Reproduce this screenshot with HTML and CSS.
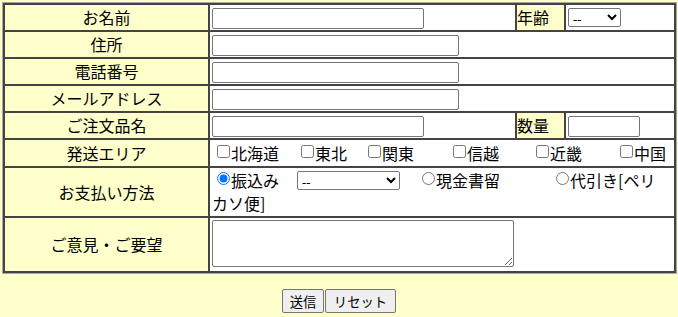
FILE: index.html
```html
<!DOCTYPE html>
<html lang="ja">
<head>
<meta charset="utf-8">
<title>注文フォーム</title>
<link rel="stylesheet" href="styles.css">
</head>
<body>
<form class="order-form">
<table class="form-table">
<colgroup><col class="c1"><col class="c2"><col class="c3"><col class="c4"></colgroup>
<tr>
<td class="label">お名前</td>
<td class="field"><input type="text" class="in-mid"></td>
<td class="label sub">年齢</td>
<td class="field narrow"><select class="sel-age"><option>--</option></select></td>
</tr>
<tr>
<td class="label">住所</td>
<td class="field" colspan="3"><input type="text" class="in-long"></td>
</tr>
<tr>
<td class="label">電話番号</td>
<td class="field" colspan="3"><input type="text" class="in-long"></td>
</tr>
<tr>
<td class="label">メールアドレス</td>
<td class="field" colspan="3"><input type="text" class="in-long"></td>
</tr>
<tr>
<td class="label">ご注文品名</td>
<td class="field"><input type="text" class="in-mid"></td>
<td class="label sub">数量</td>
<td class="field narrow"><input type="text" class="in-qty"></td>
</tr>
<tr class="area-row">
<td class="label">発送エリア</td>
<td class="field areas" colspan="3"><label class="opt w84"><input type="checkbox">北海道</label><label class="opt w67"><input type="checkbox">東北</label><label class="opt w85"><input type="checkbox">関東</label><label class="opt w83"><input type="checkbox">信越</label><label class="opt w84"><input type="checkbox">近畿</label><label class="opt"><input type="checkbox">中国</label></td>
</tr>
<tr>
<td class="label">お支払い方法</td>
<td class="field pay" colspan="3"><label class="opt first w80"><input type="radio" name="pay" checked>振込み</label><select class="sel-bank"><option>--</option></select><label class="opt w134"><input type="radio" name="pay">現金書留</label><label class="opt-inline"><input type="radio" name="pay">代引き[ペリ<br>カソ便]</label></td>
</tr>
<tr>
<td class="label">ご意見・ご要望</td>
<td class="field" colspan="3"><textarea class="comment"></textarea></td>
</tr>
</table>
<div class="actions"><button type="submit" class="btn btn-send">送信</button><button type="reset" class="btn btn-reset">リセット</button></div>
</form>
</body>
</html>
```
FILE: styles.css
```css
html, body {
  margin: 0;
  padding: 0;
  background: #ffffcc;
}
body {
  font-family: "Noto Sans CJK JP", "Noto Sans", sans-serif;
  font-size: 16px;
  color: #000;
}
.form-table {
  margin: 3px 0 0 3px;
  width: 673px;
  table-layout: fixed;
  border-collapse: separate;
  border-spacing: 0;
  border: 1px solid #444;
  box-shadow: 0 0 0 1px #a8a8a8;
}
.c1 { width: 205px; }
.c2 { width: 307px; }
.c3 { width: 49px; }
.c4 { width: 110px; }
.form-table td {
  box-sizing: border-box;
  border: 1px solid #444;
  padding: 1px 1px 1px 2px;
  line-height: 23px;
  background: #fff;
  white-space: nowrap;
}
.form-table td.label {
  background: #ffffcc;
  text-align: center;
  padding: 1px 0;
}
.form-table td.label.sub {
  text-align: left;
  padding-left: 0;
}
.form-table td.narrow {
  padding-left: 2px;
}
input[type="text"] {
  box-sizing: border-box;
  height: 21px;
  margin: 0;
  padding: 1px 2px;
  border: 1px solid #767676;
  border-radius: 2px;
  background: #fff;
  font-size: 13.333px;
  vertical-align: bottom;
}
.in-mid { width: 212px; }
.in-long { width: 247px; }
.in-qty { width: 72px; }
select {
  box-sizing: border-box;
  height: 19px;
  margin: 2px 0 0 0;
  border: 1px solid #767676;
  border-radius: 2px;
  background: #fff;
  font-family: "Noto Sans", sans-serif;
  font-size: 13.333px;
  vertical-align: top;
}
.sel-age { width: 53px; }
.sel-bank { width: 103px; margin-right: 22px; }
.areas { padding-left: 7px !important; }
.area-row td { line-height: 24px; }
.opt {
  display: inline-block;
}
.w67 { width: 67px; }
.w80 { width: 80px; }
.w83 { width: 83px; }
.w84 { width: 84px; }
.w85 { width: 85px; }
.w134 { width: 134px; }
.pay { white-space: normal !important; }
.pay .first { margin-left: 5px; }
input[type="checkbox"],
input[type="radio"] {
  width: 13px;
  height: 13px;
  margin: 0 1px 0 0;
  vertical-align: 2px;
}
.comment {
  display: block;
  box-sizing: border-box;
  width: 302px;
  height: 47px;
  margin: 1px 0 3px 0;
  border: 1px solid #767676;
  border-radius: 2px;
}
.actions {
  margin-top: 16px;
  text-align: center;
}
.btn {
  box-sizing: border-box;
  height: 24px;
  margin: 0;
  padding: 0 6px;
  border: 1px solid #767676;
  border-radius: 2px;
  background: #efefef;
  font-family: "Noto Sans CJK JP", sans-serif;
  font-size: 13.333px;
  color: #000;
  vertical-align: top;
}
.btn-send { width: 42px; }
.btn-reset { width: 71px; margin-left: 1px; }
```
